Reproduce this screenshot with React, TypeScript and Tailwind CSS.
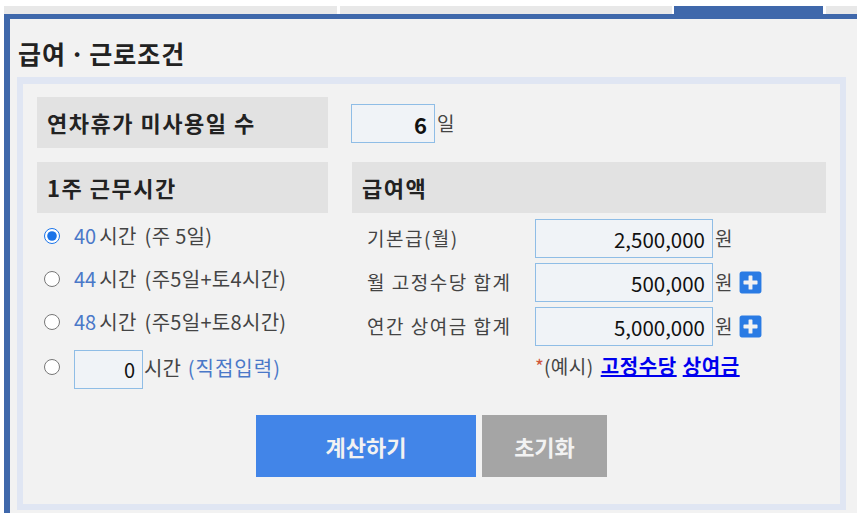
import { FaPlusSquare } from 'react-icons/fa';

const font = { fontFamily: '"Noto Sans CJK KR", "Noto Sans", sans-serif' };

const hourOptions = [
  { hours: '40', note: '(주 5일)', checked: true },
  { hours: '44', note: '(주5일+토4시간)', checked: false },
  { hours: '48', note: '(주5일+토8시간)', checked: false },
];

const payRows = [
  { label: '기본급(월)', value: '2,500,000', plus: false, top: 'mt-[6px]' },
  { label: '월 고정수당 합계', value: '500,000', plus: true, top: 'mt-[5px]' },
  { label: '연간 상여금 합계', value: '5,000,000', plus: true, top: 'mt-[5px]' },
];

function Heading({ children }: { children: React.ReactNode }) {
  return (
    <div className="flex h-[51px] items-center bg-[#e2e2e2] pl-[10px] text-[22px] font-bold tracking-[1.5px] text-[#222]">
      {children}
    </div>
  );
}

function NumberBox({ value, className }: { value: string; className: string }) {
  return (
    <input
      readOnly
      value={value}
      className={`border border-[#8fbde6] bg-[#f0f3f7] pr-[7px] text-right text-[#111] outline-none ${className}`}
    />
  );
}

export default function App() {
  return (
    <div className="h-[518px] w-[857px] overflow-hidden bg-white" style={font}>
      <div className="flex h-[14px] items-end gap-[3px] pl-[4px]">
        <div className="h-[8px] w-[333px] bg-[#e8e8e8]" />
        <div className="h-[8px] w-[332px] bg-[#e8e8e8]" />
        <div className="-ml-[1px] h-[8px] w-[149px] bg-[#3f68ab]" />
        <div className="h-[8px] flex-1 bg-[#e8e8e8]" />
      </div>
      <div className="ml-[4px] h-[499px] border-t-[5px] border-l-[6px] border-[#3f68ab] bg-[#f2f2f2]">
        <h2 className="flex h-[58px] items-center pt-[11px] pl-[8px] text-[25px] leading-none font-bold tracking-[1px] text-[#222] [word-spacing:-3px]">
          급여 · 근로조건
        </h2>
        <div className="ml-[7px] h-[433px] w-[829px] border-[6px] border-t-[7px] border-[#e0e6f3] pt-[13px] pl-[14px]">
          <div className="grid grid-cols-[291px_474px] gap-x-[24px]">
            <Heading>연차휴가 미사용일 수</Heading>
            <div className="flex items-start pt-[7px]">
              <NumberBox value="6" className="-ml-[1px] h-[39px] w-[84px] text-[22px] font-bold" />
              <span className="mt-[5px] ml-[2px] text-[19px] text-[#444]">일</span>
            </div>
            <div className="mt-[14px]">
              <Heading>1주 근무시간</Heading>
              <div className="mt-[1px] flex flex-col pl-[7px] text-[20px] text-[#444]">
                {hourOptions.map((o) => (
                  <label key={o.hours} className="flex h-[43px] items-center tracking-[0.3px]">
                    <input
                      type="radio"
                      name="hours"
                      defaultChecked={o.checked}
                      className="m-0 size-[16px] accent-[#1a73e8]"
                    />
                    <span className="ml-[14px] tracking-normal text-[#4a78c8]">{o.hours}</span>
                    <span className="ml-[3px]">시간</span>
                    <span className="ml-[8px]">{o.note}</span>
                  </label>
                ))}
                <label className="mt-[7px] flex items-start">
                  <input type="radio" name="hours" className="m-0 mt-[9px] size-[16px] accent-[#1a73e8]" />
                  <NumberBox value="0" className="ml-[14px] h-[39px] w-[69px] text-[20px]" />
                  <span className="mt-[3px] ml-[1px]">시간</span>
                  <span className="mt-[3px] ml-[7px] tracking-[1px] text-[#4a78c8]">(직접입력)</span>
                </label>
              </div>
            </div>
            <div className="mt-[14px]">
              <Heading>급여액</Heading>
              {payRows.map((r) => (
                <div key={r.label} className={`flex items-center pl-[15px] text-[19px] text-[#444] ${r.top}`}>
                  <span className="w-[168px] tracking-[1.5px]">{r.label}</span>
                  <NumberBox value={r.value} className="h-[39px] w-[178px] text-[20.5px]" />
                  <span className="ml-[2px]">원</span>
                  {r.plus && <FaPlusSquare className="ml-[6px] size-[25px] text-[#2a7be4]" />}
                </div>
              ))}
              <div className="mt-[7px] flex items-center pl-[183px] text-[19px] leading-[26px] text-[#444]">
                <span className="text-[#d0573a]">*</span>
                <span className="tracking-[0.5px]">(예시)</span>
                <a href="#" className="ml-[7px] text-[20px] font-bold tracking-[0.6px] text-[#0000ee] underline">고정수당</a>
                <a href="#" className="ml-[6px] text-[20px] font-bold tracking-[0.6px] text-[#0000ee] underline">상여금</a>
              </div>
            </div>
          </div>
          <div className="mt-[26px] ml-[219px] flex gap-[6px] text-[22px] font-bold text-[#f2f2f2]">
            <button className="h-[62px] w-[220px] bg-[#4285e8]">계산하기</button>
            <button className="h-[62px] w-[125px] bg-[#a5a5a5]">초기화</button>
          </div>
        </div>
      </div>
    </div>
  );
}
